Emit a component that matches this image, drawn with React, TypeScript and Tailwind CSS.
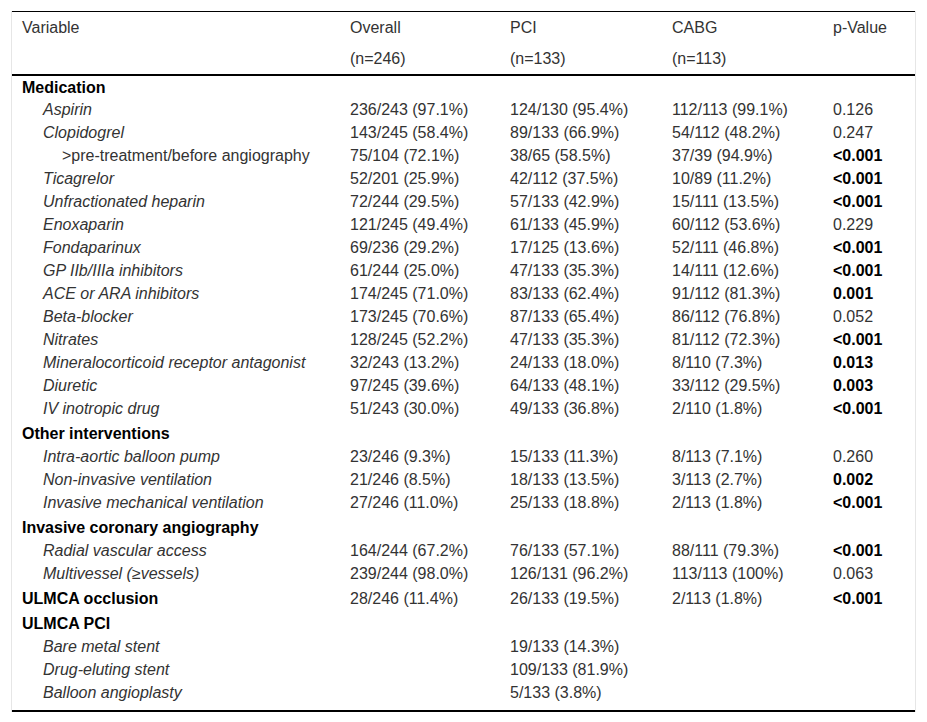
type Row = {
  label: string
  kind: "section" | "item" | "sub"
  first?: boolean
  overall?: string
  pci?: string
  cabg?: string
  p?: string
  bold?: boolean
}

const rows: Row[] = [
  { label: "Medication", kind: "section", first: true },
  { label: "Aspirin", kind: "item", overall: "236/243 (97.1%)", pci: "124/130 (95.4%)", cabg: "112/113 (99.1%)", p: "0.126" },
  { label: "Clopidogrel", kind: "item", overall: "143/245 (58.4%)", pci: "89/133 (66.9%)", cabg: "54/112 (48.2%)", p: "0.247" },
  { label: ">pre-treatment/before angiography", kind: "sub", overall: "75/104 (72.1%)", pci: "38/65 (58.5%)", cabg: "37/39 (94.9%)", p: "<0.001", bold: true },
  { label: "Ticagrelor", kind: "item", overall: "52/201 (25.9%)", pci: "42/112 (37.5%)", cabg: "10/89 (11.2%)", p: "<0.001", bold: true },
  { label: "Unfractionated heparin", kind: "item", overall: "72/244 (29.5%)", pci: "57/133 (42.9%)", cabg: "15/111 (13.5%)", p: "<0.001", bold: true },
  { label: "Enoxaparin", kind: "item", overall: "121/245 (49.4%)", pci: "61/133 (45.9%)", cabg: "60/112 (53.6%)", p: "0.229" },
  { label: "Fondaparinux", kind: "item", overall: "69/236 (29.2%)", pci: "17/125 (13.6%)", cabg: "52/111 (46.8%)", p: "<0.001", bold: true },
  { label: "GP IIb/IIIa inhibitors", kind: "item", overall: "61/244 (25.0%)", pci: "47/133 (35.3%)", cabg: "14/111 (12.6%)", p: "<0.001", bold: true },
  { label: "ACE or ARA inhibitors", kind: "item", overall: "174/245 (71.0%)", pci: "83/133 (62.4%)", cabg: "91/112 (81.3%)", p: "0.001", bold: true },
  { label: "Beta-blocker", kind: "item", overall: "173/245 (70.6%)", pci: "87/133 (65.4%)", cabg: "86/112 (76.8%)", p: "0.052" },
  { label: "Nitrates", kind: "item", overall: "128/245 (52.2%)", pci: "47/133 (35.3%)", cabg: "81/112 (72.3%)", p: "<0.001", bold: true },
  { label: "Mineralocorticoid receptor antagonist", kind: "item", overall: "32/243 (13.2%)", pci: "24/133 (18.0%)", cabg: "8/110 (7.3%)", p: "0.013", bold: true },
  { label: "Diuretic", kind: "item", overall: "97/245 (39.6%)", pci: "64/133 (48.1%)", cabg: "33/112 (29.5%)", p: "0.003", bold: true },
  { label: "IV inotropic drug", kind: "item", overall: "51/243 (30.0%)", pci: "49/133 (36.8%)", cabg: "2/110 (1.8%)", p: "<0.001", bold: true },
  { label: "Other interventions", kind: "section" },
  { label: "Intra-aortic balloon pump", kind: "item", overall: "23/246 (9.3%)", pci: "15/133 (11.3%)", cabg: "8/113 (7.1%)", p: "0.260" },
  { label: "Non-invasive ventilation", kind: "item", overall: "21/246 (8.5%)", pci: "18/133 (13.5%)", cabg: "3/113 (2.7%)", p: "0.002", bold: true },
  { label: "Invasive mechanical ventilation", kind: "item", overall: "27/246 (11.0%)", pci: "25/133 (18.8%)", cabg: "2/113 (1.8%)", p: "<0.001", bold: true },
  { label: "Invasive coronary angiography", kind: "section" },
  { label: "Radial vascular access", kind: "item", overall: "164/244 (67.2%)", pci: "76/133 (57.1%)", cabg: "88/111 (79.3%)", p: "<0.001", bold: true },
  { label: "Multivessel (≥vessels)", kind: "item", overall: "239/244 (98.0%)", pci: "126/131 (96.2%)", cabg: "113/113 (100%)", p: "0.063" },
  { label: "ULMCA occlusion", kind: "section", overall: "28/246 (11.4%)", pci: "26/133 (19.5%)", cabg: "2/113 (1.8%)", p: "<0.001", bold: true },
  { label: "ULMCA PCI", kind: "section" },
  { label: "Bare metal stent", kind: "item", pci: "19/133 (14.3%)" },
  { label: "Drug-eluting stent", kind: "item", pci: "109/133 (81.9%)" },
  { label: "Balloon angioplasty", kind: "item", pci: "5/133 (3.8%)" },
]

const grid = "grid grid-cols-[338px_160px_162px_161px_1fr] items-center"

function BodyRow({ row }: { row: Row }) {
  const height = row.first ? "h-[22px]" : row.kind === "section" ? "h-[25px] pt-[1px]" : "h-[23px]"
  const label =
    row.kind === "section"
      ? "pl-[10px] font-bold text-black"
      : row.kind === "sub"
        ? "pl-[50px]"
        : "pl-[31px] italic"
  return (
    <div className={`${grid} ${height}`}>
      <div className={`${label} whitespace-nowrap`}>{row.label}</div>
      <div>{row.overall}</div>
      <div>{row.pci}</div>
      <div>{row.cabg}</div>
      <div className={row.bold ? "font-bold text-black" : ""}>{row.p}</div>
    </div>
  )
}

export default function App() {
  return (
    <div className="min-h-screen bg-white pl-[11px] pt-[11px] font-['Liberation_Sans',Arial,sans-serif] text-[16px] leading-[19px] text-[#333]">
      <div className="w-[905px] border-x border-[#e6e6e6]">
        <div className="border-t border-black">
          <div className={`${grid} h-[31px]`}>
            <div className="pl-[10px]">Variable</div>
            <div>Overall</div>
            <div>PCI</div>
            <div>CABG</div>
            <div>p-Value</div>
          </div>
          <div className={`${grid} h-[31px]`}>
            <div />
            <div>(n=246)</div>
            <div>(n=133)</div>
            <div>(n=113)</div>
            <div />
          </div>
        </div>
        <div className="border-y-2 border-black pb-[6px]">
          {rows.map((r) => (
            <BodyRow key={r.label} row={r} />
          ))}
        </div>
      </div>
    </div>
  )
}
